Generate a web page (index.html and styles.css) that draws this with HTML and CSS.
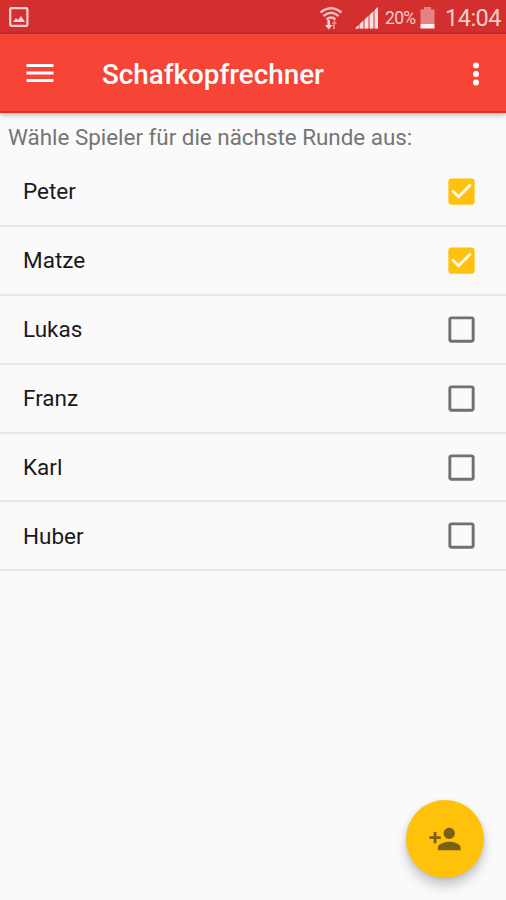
FILE: index.html
```html
<!DOCTYPE html>
<html lang="de">
<head>
<meta charset="utf-8">
<title>Schafkopfrechner</title>
<link rel="stylesheet" href="styles.css">
</head>
<body>
<svg class="defs" width="0" height="0">
  <symbol id="checked" viewBox="0 0 24 24"><path fill="#fffbe9" d="M4 4h16v16H4z"/><path fill="#ffc10d" d="M19 3H5c-1.11 0-2 .9-2 2v14c0 1.1.89 2 2 2h14c1.11 0 2-.9 2-2V5c0-1.1-.89-2-2-2zm-9 14l-5-5 1.41-1.41L10 14.17l7.59-7.59L19 8l-9 9z"/></symbol>
  <symbol id="unchecked" viewBox="0 0 24 24"><path fill="#717171" d="M19 5v14H5V5h14m0-2H5c-1.1 0-2 .9-2 2v14c0 1.1.9 2 2 2h14c1.1 0 2-.9 2-2V5c0-1.1-.9-2-2-2z"/></symbol>
</svg>
<div class="statusbar">
  <svg class="picture" width="20" height="20" viewBox="0 0 20 20"><rect x="1.2" y="1.2" width="17.2" height="17.6" rx="1" fill="none" stroke="#f9d3d3" stroke-width="2.2"/><path fill="#f9d3d3" d="M4 15l3-4 2 2 3-4 4 6z"/></svg>
  <svg class="wifi" width="24" height="26" viewBox="0 0 24 26"><g fill="none" stroke="#f3bcbc" stroke-width="2.400"><path d="M1.500 7.500Q12-1 22.500 7.500M4.500 11Q12 4.500 19.500 11M7.500 14.500Q12 10.500 16.500 14.500"/></g><path fill="#fbdede" d="M8.500 15h2.500v5h2.500l-3.700 4.500L6 20h2.500z"/><path fill="#e98585" d="M14 24v-5h-1.500l2.700-4 2.800 4h-2v5z"/></svg>
  <svg class="signal" width="24" height="22" viewBox="0 0 24 22"><path fill="#e58a8a" d="M0 21.500L23 0v21.500z"/><path fill="#fae0e0" d="M0 21.500l3.500-3.300v3.300zM5 16.800l3-2.800v7.500H5zM10 12.100l3-2.800v12.200h-3zM15 7.500l3-2.800v16.800h-3zM20 2.800L23 0v21.500h-3z"/></svg>
  <span class="percent">20%</span>
  <svg class="battery" width="15" height="22" viewBox="0 0 15 22"><path fill="#e48383" d="M4 0h7v2.500h3.500V17H.5V2.500H4z"/><path fill="#fff0ee" d="M.5 17h14v4.500H.5z"/></svg>
  <span class="clock">14:04</span>
</div>
<header class="appbar">
  <svg class="menu" width="28" height="22" viewBox="0 0 28 22"><path fill="#fff" d="M.5 1h27v3H.5zM.5 8.500h27v3H.5zM.5 16h27v3H.5z"/></svg>
  <h1 class="title">Schafkopfrechner</h1>
  <svg class="more" width="8" height="24" viewBox="0 0 8 24"><g fill="#fff"><circle cx="4" cy="3.500" r="3"/><circle cx="4" cy="12" r="3"/><circle cx="4" cy="20.500" r="3"/></g></svg>
</header>
<main>
  <p class="prompt">Wähle Spieler für die nächste Runde aus:</p>
  <ul class="players">
    <li><span>Peter</span><svg class="box"><use href="#checked"/></svg></li>
    <li><span>Matze</span><svg class="box"><use href="#checked"/></svg></li>
    <li><span>Lukas</span><svg class="box"><use href="#unchecked"/></svg></li>
    <li><span>Franz</span><svg class="box"><use href="#unchecked"/></svg></li>
    <li><span>Karl</span><svg class="box"><use href="#unchecked"/></svg></li>
    <li><span>Huber</span><svg class="box"><use href="#unchecked"/></svg></li>
  </ul>
</main>
<button class="fab" aria-label="Spieler hinzufügen">
  <svg width="34" height="34" viewBox="0 0 24 24"><path fill="#7b6014" d="M15 12c2.210 0 4-1.790 4-4s-1.790-4-4-4-4 1.790-4 4 1.790 4 4 4zm-9-2V7H4v3H1v2h3v3h2v-3h3v-2H6zm9 4c-2.670 0-8 1.340-8 4v2h16v-2c0-2.660-5.330-4-8-4z"/></svg>
</button>
</body>
</html>
```
FILE: styles.css
```css
* {
  box-sizing: border-box;
}

body {
  margin: 0;
  height: 900px;
  overflow: hidden;
  background: #fafafa;
  font-family: Roboto, "Liberation Sans", sans-serif;
}

.defs {
  display: block;
}

.statusbar {
  display: flex;
  align-items: center;
  height: 34px;
  padding: 1px 5px 0 9px;
  background: linear-gradient(#d32f2f 31px, #bd2c2a);
  color: #f7cccc;
}

.picture {
  margin: 0 auto 2px 0;
}

.wifi {
  margin-right: 12px;
}

.signal {
  margin-right: 6px;
}

.percent {
  width: 31px;
  margin-right: 4px;
  font-size: 17.500px;
  letter-spacing: -0.7px;
  white-space: nowrap;
}

.battery {
  margin-right: 10px;
}

.clock {
  width: 56px;
  font-size: 23.500px;
  letter-spacing: -0.5px;
  white-space: nowrap;
}

.appbar {
  position: relative;
  display: flex;
  align-items: center;
  height: 79px;
  padding: 2px 26px 0;
  border-bottom: 2px solid #e5301f;
  background: #f64436;
  box-shadow: 0 2px 5px rgba(0, 0, 0, 0.26);
  color: #fff;
}

.menu {
  margin-top: 1px;
}

.title {
  flex: 1;
  margin: 2px 0 0 48px;
  font-size: 27.800px;
  font-weight: 500;
  line-height: 32px;
}

.prompt {
  height: 45px;
  margin: 0;
  padding: 9px 8px 0;
  color: #757575;
  font-size: 22.400px;
  line-height: 30px;
  white-space: nowrap;
}

.players {
  margin: 0;
  padding: 0;
  list-style: none;
}

.players li {
  display: flex;
  align-items: center;
  justify-content: space-between;
  height: 68.900px;
  padding: 0 27px 0 23px;
  border-bottom: 2px solid #e6e6e6;
  color: #1a1a1a;
  font-size: 22.500px;
}

.box {
  width: 35px;
  height: 35px;
}

.fab {
  position: absolute;
  top: 800px;
  left: 406px;
  display: flex;
  align-items: center;
  justify-content: center;
  width: 78px;
  height: 78px;
  padding: 0;
  border: 0;
  border-radius: 50%;
  background: #ffc10a;
  box-shadow: 0 8px 12px rgba(0, 0, 0, 0.2), 0 1px 5px rgba(0, 0, 0, 0.1);
}
```
